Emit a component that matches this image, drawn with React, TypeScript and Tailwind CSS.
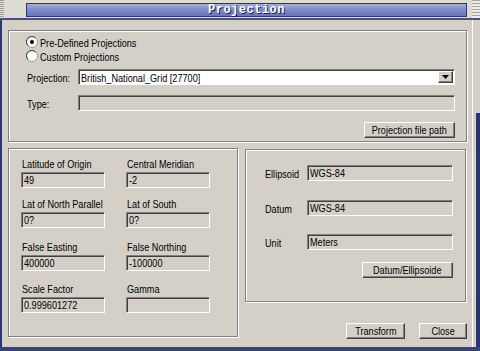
const font = { fontFamily: '"Liberation Sans", Arial, sans-serif' };

const sunken =
  'border border-t-[#808080] border-l-[#808080] border-b-white border-r-white shadow-[inset_1px_1px_0_#404040]';
const raised =
  'border border-t-white border-l-white border-b-[#404040] border-r-[#404040] shadow-[inset_-1px_-1px_0_#808080] bg-[#d4d0c8]';
const group = 'border border-[#808080] shadow-[inset_1px_1px_0_#fff,1px_1px_0_#fff]';

// the dialog's font is a narrow Tahoma-like face; squeeze Liberation Sans to match
function T({ children, center }: { children: React.ReactNode; center?: boolean }) {
  return (
    <span
      className={`inline-block whitespace-nowrap text-[11px] leading-none text-black scale-x-[0.83] ${
        center ? 'origin-center' : 'origin-left'
      }`}
    >
      {children}
    </span>
  );
}

function Radio({ checked, label }: { checked?: boolean; label: string }) {
  return (
    <div className="flex items-center h-[12px] -ml-[1px]">
      <svg width="12" height="12" viewBox="0 0 12 12" className="shrink-0">
        <circle cx="6" cy="6" r="5.5" fill="#fff" stroke="#9a978f" />
        <path d="M2 9.5 A5 5 0 0 1 9.5 2" fill="none" stroke="#404040" strokeWidth="1" />
        {checked && <circle cx="6" cy="6" r="2" fill="#000" />}
      </svg>
      <span className="ml-[2px]">
        <T>{label}</T>
      </span>
    </div>
  );
}

function Field({ value, w, white }: { value?: string; w: string; white?: boolean }) {
  return (
    <div
      className={`${sunken} ${w} h-[16px] flex items-center pl-[2px] overflow-hidden ${
        white ? 'bg-white' : 'bg-[#d4d0c8]'
      }`}
    >
      <T>{value}</T>
    </div>
  );
}

function Button({ label, w }: { label: string; w: string }) {
  return (
    <div className={`${raised} ${w} h-[16px] flex items-center justify-center`}>
      <T center>{label}</T>
    </div>
  );
}

function ParamCell({ label, value }: { label: string; value: string }) {
  return (
    <div className="w-[105px] flex flex-col">
      <div className="h-[14px] flex items-center pl-[1px]">
        <T>{label}</T>
      </div>
      <div className="mt-[1px]">
        <Field value={value} w="w-[84px]" />
      </div>
    </div>
  );
}

function InfoRow({ label, value }: { label: string; value: string }) {
  return (
    <div className="flex items-center h-[16px]">
      <span className="w-[42px]">
        <T>{label}</T>
      </span>
      <Field value={value} w="w-[146px]" />
    </div>
  );
}

export default function App() {
  return (
    <div className="w-[480px] h-[351px] bg-[#d4d0c8] flex flex-col overflow-hidden select-none" style={font}>
      {/* Title strip */}
      <div className="h-[20px] flex shrink-0 bg-[#dedbd3] border-b-2 border-[#4a5080]">
        <div className="w-[4px] bg-[repeating-linear-gradient(#9a9890_0_1px,#e6e4de_1px_2px)]" />
        <div className="w-[22px]" />
        <div className="flex-1 mt-[3px] h-[14px] border border-[#2e3670] bg-gradient-to-b from-[#a4abdd] via-[#808ac8] to-[#6a74b6] flex items-center justify-center">
          <span
            className="text-[12px] font-bold text-white tracking-[0.5px] leading-none"
            style={{ fontFamily: '"Liberation Mono", "DejaVu Sans Mono", monospace', textShadow: '1px 1px 0 #1a1f48' }}
          >
            Projection
          </span>
        </div>
        <div className="w-[5px]" />
        <div className="w-[8px] bg-[repeating-linear-gradient(#a8a69e_0_1px,#ecebe6_1px_3px)]" />
      </div>

      {/* Body */}
      <div className="flex-1 flex">
        <div className="w-[2px] bg-[#2a3470]" />
        <div className="flex-1 flex flex-col pl-[6px] pt-[10px]">
          {/* Projection group */}
          <div className={`${group} w-[459px] h-[112px] flex flex-col pl-[18px] pr-[11px] pt-[5px]`}>
            <Radio checked label="Pre-Defined Projections" />
            <div className="mt-[2px]">
              <Radio label="Custom Projections" />
            </div>
            <div className="mt-[7px] flex items-center h-[16px]">
              <span className="w-[51px]">
                <T>Projection:</T>
              </span>
              <div className={`${sunken} flex-1 h-[16px] bg-white flex items-center pl-[2px] pr-[1px]`}>
                <span className="flex-1">
                  <T>British_National_Grid [27700]</T>
                </span>
                <div className={`${raised} w-[15px] h-[12px] flex items-center justify-center`}>
                  <svg width="7" height="4" viewBox="0 0 7 4">
                    <path d="M0 0h7L3.5 4z" fill="#000" />
                  </svg>
                </div>
              </div>
            </div>
            <div className="mt-[10px] flex items-center h-[16px]">
              <span className="w-[51px]">
                <T>Type:</T>
              </span>
              <div className={`${sunken} flex-1 h-[16px] bg-[#d4d0c8]`} />
            </div>
            <div className="mt-[11px] flex justify-end">
              <Button label="Projection file path" w="w-[91px]" />
            </div>
          </div>

          <div className="mt-[6px] flex gap-[7px]">
            {/* Parameters group */}
            <div className={`${group} w-[230px] h-[189px] flex flex-col pl-[12px] pt-[8px]`}>
              <div className="flex">
                <ParamCell label="Latitude of Origin" value="49" />
                <ParamCell label="Central Meridian" value="-2" />
              </div>
              <div className="flex mt-[9px]">
                <ParamCell label="Lat of North Parallel" value="0?" />
                <ParamCell label="Lat of South" value="0?" />
              </div>
              <div className="flex mt-[12px]">
                <ParamCell label="False Easting" value="400000" />
                <ParamCell label="False Northing" value="-100000" />
              </div>
              <div className="flex mt-[11px]">
                <ParamCell label="Scale Factor" value="0.999601272" />
                <ParamCell label="Gamma" value="" />
              </div>
            </div>

            <div className="flex flex-col">
              {/* Ellipsoid group */}
              <div className={`${group} w-[221px] h-[153px] mt-[1px] flex flex-col pl-[19px] pt-[15px]`}>
                <InfoRow label="Ellipsoid" value="WGS-84" />
                <div className="mt-[19px]">
                  <InfoRow label="Datum" value="WGS-84" />
                </div>
                <div className="mt-[18px]">
                  <InfoRow label="Unit" value="Meters" />
                </div>
                <div className="mt-[12px] flex justify-end pr-[12px]">
                  <Button label="Datum/Ellipsoide" w="w-[91px]" />
                </div>
              </div>
              <div className="mt-[21px] flex justify-end gap-[14px] -mr-[1px]">
                <Button label="Transform" w="w-[59px]" />
                <Button label="Close" w="w-[48px]" />
              </div>
            </div>
          </div>
        </div>
        {/* right edge */}
        <div className="w-[8px] flex">
          <div className="w-[1px] bg-white" />
          <div className="w-[3px]" />
          <div className="w-[4px] flex flex-col">
            <div className="h-[93px]" />
            <div className="flex-1 bg-[#2a3470]" />
          </div>
        </div>
      </div>
      <div className="h-[4px] bg-[#3b4478] shrink-0" />
    </div>
  );
}
